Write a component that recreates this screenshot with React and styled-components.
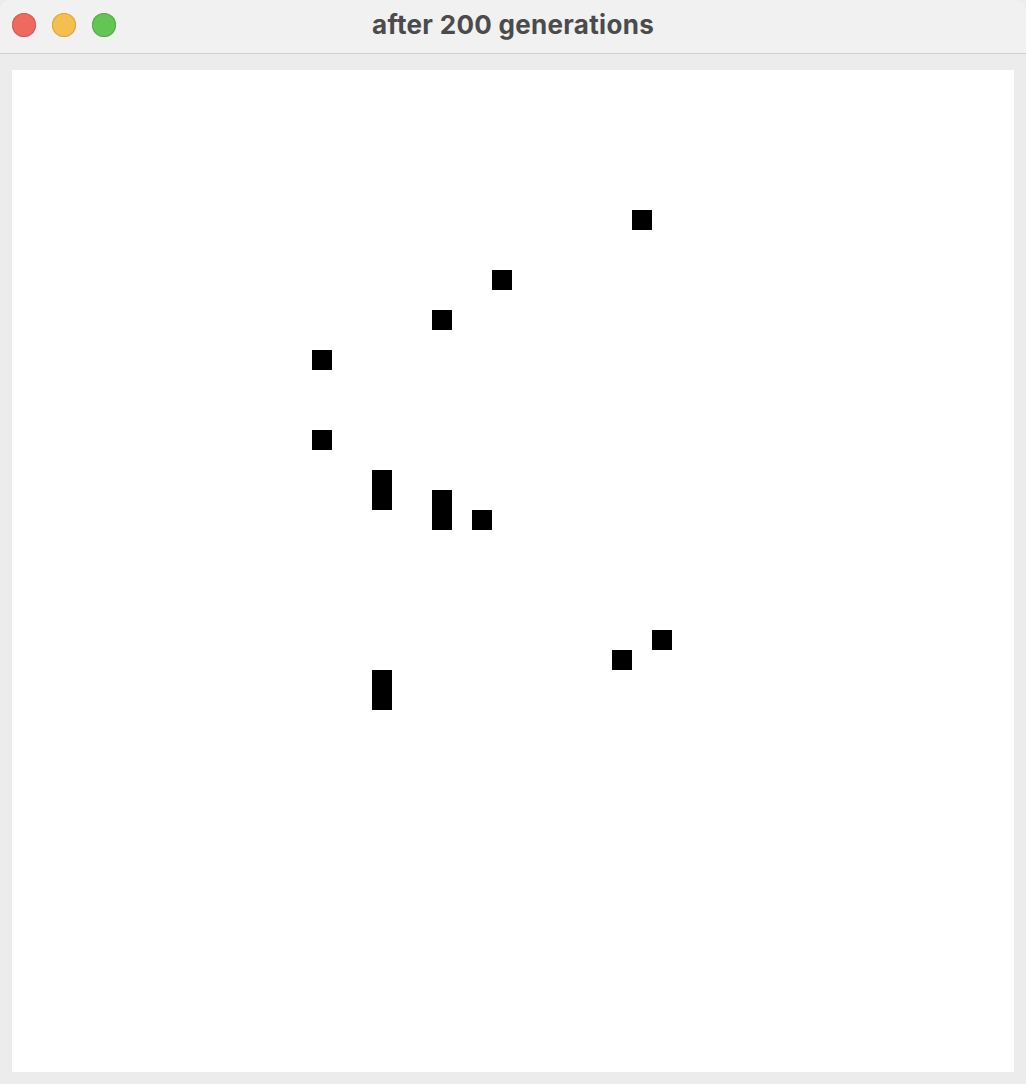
import React from "react";
import styled, { createGlobalStyle } from "styled-components";

const GlobalStyle = createGlobalStyle`
	html, body {
		margin: 0;
		padding: 0;
		background: #ececec;
	}
`;

const Window = styled.div`
	width: 1026px;
	height: 1084px;
	display: flex;
	flex-direction: column;
	background: #ececec;
	border-radius: 10px 10px 0 0;
	overflow: hidden;
	font-family: Inter, "Open Sans", sans-serif;
`;

const TitleBar = styled.div`
	height: 53px;
	flex-shrink: 0;
	display: flex;
	align-items: center;
	position: relative;
	background: #f1f1f1;
	border-bottom: 1px solid #d0d0d0;
`;

const Lights = styled.div`
	display: flex;
	gap: 16px;
	padding-left: 12px;
	padding-bottom: 3px;
`;

const Light = styled.span`
	width: 24px;
	height: 24px;
	border-radius: 50%;
	background: ${(props) => props.colour};
	box-shadow: inset 0 0 0 1px ${(props) => props.edge};
`;

const Title = styled.div`
	position: absolute;
	left: 0;
	right: 0;
	top: 0;
	bottom: 4px;
	display: flex;
	align-items: center;
	justify-content: center;
	font-size: 26px;
	font-weight: 700;
	letter-spacing: 0.3px;
	color: #4b4b4b;
	pointer-events: none;
`;

const Body = styled.div`
	flex: 1;
	padding: 16px 12px 12px 12px;
`;

const Board = styled.div`
	width: 1002px;
	height: 1002px;
	background: #ffffff;
	display: grid;
	grid-template-columns: repeat(50, 20px);
	grid-template-rows: repeat(50, 20px);
`;

const Cell = styled.div`
	background: #000000;
`;

// live cells after 200 generations, [col, row]
const alive = [
	[31, 7],
	[24, 10],
	[21, 12],
	[15, 14],
	[15, 18],
	[18, 20],
	[18, 21],
	[21, 21],
	[21, 22],
	[23, 22],
	[32, 28],
	[30, 29],
	[18, 30],
	[18, 31],
];

const App = () => {
	return (
		<>
			<GlobalStyle />
			<Window>
				<TitleBar>
					<Lights>
						<Light colour="#ee6a5f" edge="#d85a50" />
						<Light colour="#f5be4f" edge="#dca53c" />
						<Light colour="#62c554" edge="#52ad45" />
					</Lights>
					<Title>after 200 generations</Title>
				</TitleBar>
				<Body>
					<Board>
						{alive.map(([c, r]) => (
							<Cell
								key={`${c}-${r}`}
								style={{ gridColumn: c + 1, gridRow: r + 1 }}
							/>
						))}
					</Board>
				</Body>
			</Window>
		</>
	);
};

export default App;
